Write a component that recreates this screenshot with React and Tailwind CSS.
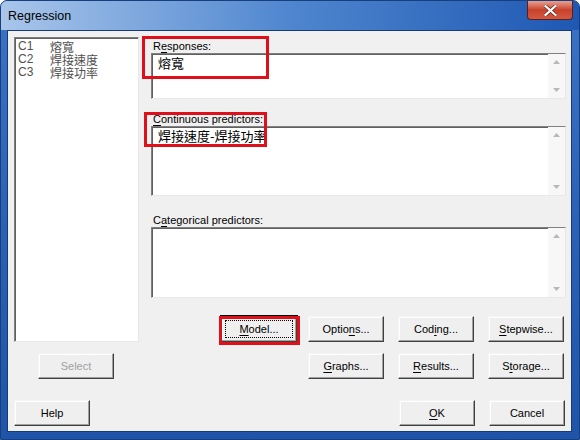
import React from "react";

const ui = { fontFamily: '"Liberation Sans", Arial, "Noto Sans CJK TC", sans-serif' };
const cjk = { fontFamily: '"Noto Sans CJK TC", "Noto Sans CJK SC", sans-serif' };

// underline one letter, like a Windows access key
const Key = ({ text, k }) => {
  if (k == null) return <span>{text}</span>;
  return (
    <span>
      {text.slice(0, k)}
      <span className="underline underline-offset-2">{text[k]}</span>
      {text.slice(k + 1)}
    </span>
  );
};

const Button = ({ label, k, disabled, focused, className = "" }) => (
  <div
    className={
      "w-[76px] h-[26px] flex items-center justify-center text-[11px] border border-t-[#f4f4f4] border-l-[#f4f4f4] border-r-[#404040] border-b-[#404040] bg-[#efefef] shadow-[inset_-1px_-1px_0_#a0a0a0,inset_1px_1px_0_#ffffff] " +
      (disabled ? "text-[#a0a0a0] " : "text-black ") +
      (focused ? "outline outline-1 outline-black " : "") +
      className
    }
  >
    {focused ? (
      <div className="w-[68px] h-[18px] flex items-center justify-center border border-dotted border-black">
        <Key text={label} k={k} />
      </div>
    ) : (
      <Key text={label} k={k} />
    )}
  </div>
);

const TextBox = ({ height, children }) => (
  <div
    className={
      "flex w-[415px] bg-white border border-t-[#808080] border-l-[#808080] border-r-[#e8e8e8] border-b-[#e8e8e8] shadow-[inset_1px_1px_0_#606060] " +
      height
    }
  >
    <div className="flex-1 pl-[6px] pt-[1px] text-[13px] leading-[16px] text-black" style={cjk}>
      {children}
    </div>
    <div className="w-[17px] flex flex-col items-center justify-between py-[6px] bg-[#f7f7f7]">
      <svg width="7" height="4" viewBox="0 0 7 4">
        <path d="M0 4 L3.5 0 L7 4 Z" fill="#b8b8b8" />
      </svg>
      <svg width="7" height="4" viewBox="0 0 7 4">
        <path d="M0 0 L3.5 4 L7 0 Z" fill="#b8b8b8" />
      </svg>
    </div>
  </div>
);

const Label = ({ text, k, className = "" }) => (
  <div className={"h-[14px] leading-[14px] text-[11px] text-black pl-[2px] " + className}>
    <Key text={text} k={k} />
  </div>
);

export default function App() {
  const vars = [
    ["C1", "熔寬"],
    ["C2", "焊接速度"],
    ["C3", "焊接功率"],
  ];

  return (
    <div
      className="relative w-[580px] h-[440px] flex flex-col rounded-t-[7px] border border-[#173f7e] bg-gradient-to-b from-[#3d73c4] via-[#2c62b6] to-[#1f54a8] overflow-hidden"
      style={ui}
    >
      {/* title bar */}
      <div className="h-[29px] flex items-start justify-between bg-gradient-to-r from-[#a9c6ea] via-[#4f86cf] to-[#1e58b2]">
        <div className="pl-[7px] pt-[6px] text-[12.5px] text-black">Regression</div>
        <div className="mr-[6px] w-[46px] h-[19px] flex items-center justify-center rounded-b-[4px] border border-t-0 border-[#5a2020] bg-gradient-to-b from-[#e8a090] via-[#c8402a] to-[#d25a40]">
          <svg width="13" height="11" viewBox="0 0 13 11">
            <path d="M1.5 1 L11.5 10 M11.5 1 L1.5 10" stroke="#5a1a10" strokeWidth="3.4" strokeLinecap="square" />
            <path d="M1.5 1 L11.5 10 M11.5 1 L1.5 10" stroke="#ffffff" strokeWidth="2.2" strokeLinecap="square" />
          </svg>
        </div>
      </div>

      {/* client area */}
      <div className="ml-[6px] mr-[7px] mb-[7px] flex-1 flex flex-col bg-[#f0f0f0] border border-[#153b78]">
        <div className="flex">
          {/* variable list */}
          <div className="ml-[6px] mt-[6px] w-[125px] h-[305px] bg-white border border-t-[#808080] border-l-[#808080] border-r-[#e8e8e8] border-b-[#e8e8e8] shadow-[inset_1px_1px_0_#606060] pt-[2px] pl-[3px]">
            {vars.map(([c, n]) => (
              <div key={c} className="flex h-[13px] leading-[13px] items-center text-[12px] text-[#505050]">
                <span className="w-[32px] leading-[13px]">{c}</span>
                <span className="leading-[13px]" style={cjk}>{n}</span>
              </div>
            ))}
          </div>

          {/* right column */}
          <div className="ml-[12px] flex flex-col">
            <Label text="Responses:" k={1} className="mt-[8px]" />
            <TextBox height="h-[46px]">熔寬</TextBox>
            <Label text="Continuous predictors:" k={0} className="mt-[13px]" />
            <TextBox height="h-[70px]">焊接速度-焊接功率</TextBox>
            <Label text="Categorical predictors:" k={1} className="mt-[17px]" />
            <TextBox height="h-[71px]" />
            <div className="flex mt-[18px] pl-[70px]">
              <Button label="Model..." k={0} focused />
              <Button label="Options..." k={5} className="ml-[11px]" />
              <Button label="Coding..." k={3} className="ml-[14px]" />
              <Button label="Stepwise..." k={0} className="ml-[14px]" />
            </div>
          </div>
        </div>

        <div className="flex mt-[11px]">
          <Button label="Select" disabled className="ml-[30px]" />
          <Button label="Graphs..." k={0} className="ml-[194px]" />
          <Button label="Results..." k={0} className="ml-[14px]" />
          <Button label="Storage..." k={1} className="ml-[14px]" />
        </div>

        <div className="flex mt-[21px]">
          <Button label="Help" className="ml-[6px]" />
          <Button label="OK" k={0} className="ml-[309px]" />
          <Button label="Cancel" className="ml-[14px]" />
        </div>
      </div>

      {/* red annotation boxes */}
      <div className="absolute left-[141px] top-[35px] w-[127px] h-[43px] border-[3px] border-[#e0101a]" />
      <div className="absolute left-[143px] top-[111px] w-[123px] h-[35px] border-[3px] border-[#e0101a]" />
      <div className="absolute left-[218px] top-[315px] w-[81px] h-[29px] border-[3px] border-[#e0101a]" />
    </div>
  );
}
